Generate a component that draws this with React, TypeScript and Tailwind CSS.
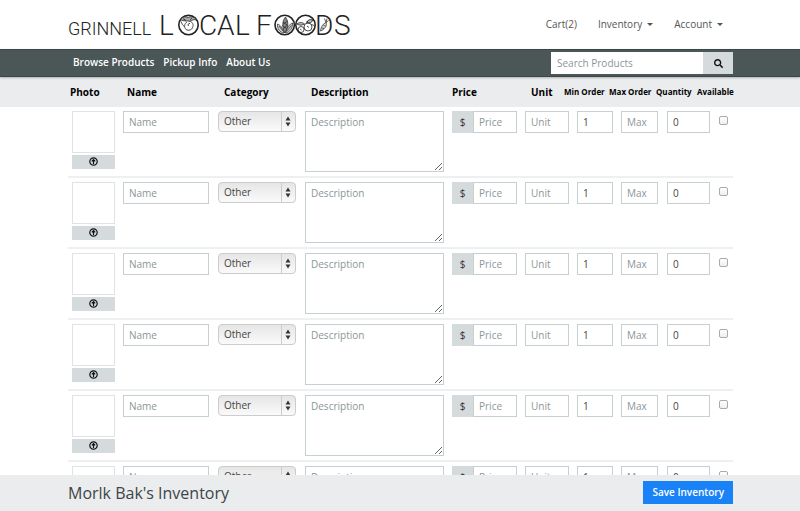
import { FaSearch } from "react-icons/fa";

const INK = "#222222";

function Logo() {
  return (
    <a href="#home" aria-label="Grinnell Local Foods" className="block shrink-0">
      <svg width="286" height="41" viewBox="0 0 286 41" fill="none" stroke={INK} aria-hidden="true">
        <g fill={INK} stroke="none" fontFamily="Roboto, Lato, sans-serif" fontWeight="300">
          <text x="0" y="31" fontSize="18">GRINNELL</text>
          <g fontSize="28">
            <text x="91" y="31">L</text>
            <text x="131" y="31">C</text>
            <text x="149" y="31">A</text>
            <text x="167" y="31">L</text>
            <text x="188" y="31">F</text>
            <text x="247" y="31">D</text>
            <text x="266" y="31">S</text>
          </g>
        </g>
        <g strokeWidth="1.600">
          <circle cx="120.500" cy="21" r="9.700" />
          <circle cx="216.700" cy="21" r="9.700" />
          <circle cx="237.500" cy="21" r="9.700" />
        </g>
        {/* tomato hanging from its leaves */}
        <g strokeWidth="0.800">
          <path d="M112.500 15.500C114 13 117 12 120 13.500C123 12 127 13 129 16C126 15 124 16 122 17.500C119 16 116 18 112.500 15.500Z" fill="#aaaaaa" />
          <path d="M119 18c-3 2-3 5-1 7.500c2.500 1.500 6 .5 6.500-2c1.500-3 0-5-2-6M113 17.500c1 2 1.500 4 3.500 5M122 19.500c-1.500-.5-2.500 1-1.500 2.500M115 14.500l3 2M124 14l-2 2" />
        </g>
        {/* ear of corn between its husks */}
        <g strokeWidth="0.700">
          <path d="M217.500 13c-3.500 4-3.500 10-1 16c4-5 4.500-11 1-16z" fill="#888888" />
          <path d="M209.500 20c3 1 5 4 6.500 9c-4-.5-7-4-6.500-9zM224.500 19c-3 1-5.500 5-7 10c4.500-1 7.500-5 7-10z" fill="#cccccc" />
          <path d="M215 18l4 3M214.500 21.500l4 3M219.500 17l-4 3M219.500 21l-4 3.500M211 22l4 5M223.500 21.500l-5 6" />
        </g>
        {/* two apples under a leaf */}
        <g strokeWidth="0.800">
          <circle cx="240" cy="23" r="4" />
          <circle cx="233" cy="25.500" r="3" />
          <path d="M229 20c2.500-2 5-2 7.500 0c-2.500 1.500-5 1.500-7.500 0zM238.500 18.500c1-2.500 3.500-3.500 6.500-2.500c-1 2.500-3.500 3.500-6.500 2.500z" fill="#bbbbbb" />
          <path d="M240 19l-1-2M239 22l2 1.500M232 25l1.500 1M243.500 20.500l2.500 1" />
        </g>
        {/* carrot */}
        <g strokeWidth="0.700">
          <path d="M252.500 27c.5-4 2-7 5.500-8.500c1.500 3-1.500 7-5.500 8.500z" fill="#dddddd" />
          <path d="M258 18.500l-1.500-4M258 18.500l1-4M258 18.500l2.500-2M254 24l2 .5M255.500 21.500l2 .5" />
        </g>
      </svg>
    </a>
  );
}

const field =
  "block h-[22px] w-full min-w-0 border border-[#c6cfd1] bg-white px-[5px] text-[10px] text-[#444444] placeholder:text-[#8b9698] placeholder:opacity-100 outline-none focus:border-[#1a82f7]";

const menus = ["Inventory", "Account"];
const links = ["Browse Products", "Pickup Info", "About Us"];
const rows = [1, 2, 3, 4, 5, 6];

function UploadIcon() {
  return (
    <svg width="9" height="9" viewBox="0 0 9 9" fill="none" stroke="#111" aria-hidden="true">
      <circle cx="4.500" cy="4.500" r="3.700" strokeWidth="1.200" />
      <path d="M4.500 7V3M2.800 4.400L4.500 2.600L6.200 4.400" strokeWidth="1.200" />
    </svg>
  );
}

function ProductRow({ id }: { id: number }) {
  return (
    <tr className="grid h-[71px] grid-cols-[51px_94px_87px_minmax(148px,1fr)_73px_52px_44px_45px_52px_19px] border-b-2 border-[#eeeff0] pt-1 *:px-1">
      <td>
        <div className="h-[42px] border border-[#dfe3e4]" />
        <button type="button" aria-label={`Upload photo ${id}`} className="mt-[2px] flex h-[14px] w-full items-center justify-center bg-[#d5dadc] pb-[2px]">
          <UploadIcon />
        </button>
      </td>
      <td>
        <input aria-label={`Name ${id}`} placeholder="Name" className={field} />
      </td>
      <td>
        <div className="relative ml-px">
          <select
            aria-label={`Category ${id}`}
            className="block h-[21px] w-full appearance-none rounded-[4px] border border-[#cccccc] bg-linear-to-b from-[#e6e6e6] to-[#fafafa] px-[5px] text-[10px] text-[#444444] outline-none"
          >
            <option>Other</option>
          </select>
          <svg width="14" height="19" viewBox="0 0 14 19" className="pointer-events-none absolute top-px right-px" aria-hidden="true">
            <path d="M.5 0V19" stroke="#cccccc" />
            <path d="M4.500 8.500L7 4.500L9.500 8.500zM4.500 10.500L7 14.500L9.500 10.500z" fill="#333333" />
          </svg>
        </div>
      </td>
      <td className="pl-[5px]!">
        <textarea
          aria-label={`Description ${id}`}
          placeholder="Description"
          className="block h-[61px] w-full border border-[#c6cfd1] px-[5px] py-[3px] text-[10px] leading-[15px] text-[#444444] outline-none placeholder:text-[#8b9698] placeholder:opacity-100"
        />
      </td>
      <td className="flex">
        <span className="flex h-[22px] w-[21px] shrink-0 items-center justify-center bg-[#d5dadc] text-[10px] text-[#333333]">$</span>
        <input aria-label={`Price ${id}`} placeholder="Price" className={field} />
      </td>
      <td>
        <input aria-label={`Unit ${id}`} placeholder="Unit" className={field} />
      </td>
      <td>
        <input aria-label={`Minimum order ${id}`} defaultValue="1" className={field} />
      </td>
      <td>
        <input aria-label={`Maximum order ${id}`} placeholder="Max" className={field} />
      </td>
      <td className="pl-[5px]!">
        <input aria-label={`Quantity ${id}`} defaultValue="0" className={field} />
      </td>
      <td className="pl-[5px]!">
        <input
          type="checkbox"
          aria-label={`Available ${id}`}
          className="mt-[5px] block size-[9px] appearance-none rounded-[2px] border border-[#aaaaaa] bg-linear-to-b from-white to-[#eeeeee] checked:bg-[#1a82f7]"
        />
      </td>
    </tr>
  );
}

export default function App() {
  return (
    <div className="flex h-screen flex-col overflow-hidden bg-white font-['Open_Sans','Noto_Sans',sans-serif] text-[10px] text-[#555555]">
      <header className="flex h-[49px] shrink-0 items-center justify-between pr-[77px] pl-[68px]">
        <Logo />
        <nav aria-label="Account" className="flex items-center gap-[21px]">
          <a href="#cart">Cart(2)</a>
          {menus.map((m) => (
            <button key={m} type="button" className="flex items-center gap-[5px]">
              {m}
              <span className="border-x-[3px] border-t-[3px] border-x-transparent border-t-[#555555]" />
            </button>
          ))}
        </nav>
      </header>

      <div className="z-10 flex h-7 shrink-0 items-center justify-between border-y border-y-[#3b4647] bg-[#4b5657] pr-[67px] pl-[73px] shadow-[0_1px_2px_rgba(0,0,0,0.25)]">
        <nav aria-label="Main" className="flex gap-[9px] pb-[2px] font-semibold text-white">
          {links.map((l) => (
            <a key={l} href="#page">{l}</a>
          ))}
        </nav>
        <form role="search" className="flex h-[22px] w-[182px]" onSubmit={(e) => e.preventDefault()}>
          <input
            aria-label="Search Products"
            placeholder="Search Products"
            className="min-w-0 flex-1 bg-white px-[6px] outline-none placeholder:text-[#8b9698] placeholder:opacity-100"
          />
          <button type="submit" aria-label="Search" className="flex w-[30px] items-center justify-center bg-[#d5dadc] text-[#111111]">
            <FaSearch size={9} />
          </button>
        </form>
      </div>

      <main className="min-h-0 flex-1 overflow-y-auto [scrollbar-width:none]">
        <table className="block">
          <thead className="block bg-[#ebecee] pr-[67px] pl-[70px]">
            <tr className="grid h-[30px] grid-cols-[57px_97px_87px_minmax(141px,1fr)_79px_33px_45px_47px_41px_36px] items-center text-left whitespace-nowrap text-black *:font-bold">
              <th>Photo</th>
              <th>Name</th>
              <th>Category</th>
              <th>Description</th>
              <th>Price</th>
              <th>Unit</th>
              <th className="text-[8px]">Min Order</th>
              <th className="text-[8px]">Max Order</th>
              <th className="text-[8px]">Quantity</th>
              <th className="text-[8px]">Available</th>
            </tr>
          </thead>
          <tbody className="block pr-[67px] pl-[68px]">
            {rows.map((id) => (
              <ProductRow key={id} id={id} />
            ))}
          </tbody>
        </table>
      </main>

      <footer className="flex h-9 shrink-0 items-center justify-between bg-[#ebecee] pr-[67px] pl-[68px]">
        <h1 className="text-[16px] text-[#3b4647]">Morlk Bak's Inventory</h1>
        <button type="button" className="mb-[2px] h-[23px] bg-[#1a82f7] px-[9px] font-semibold text-white">
          Save Inventory
        </button>
      </footer>
    </div>
  );
}
